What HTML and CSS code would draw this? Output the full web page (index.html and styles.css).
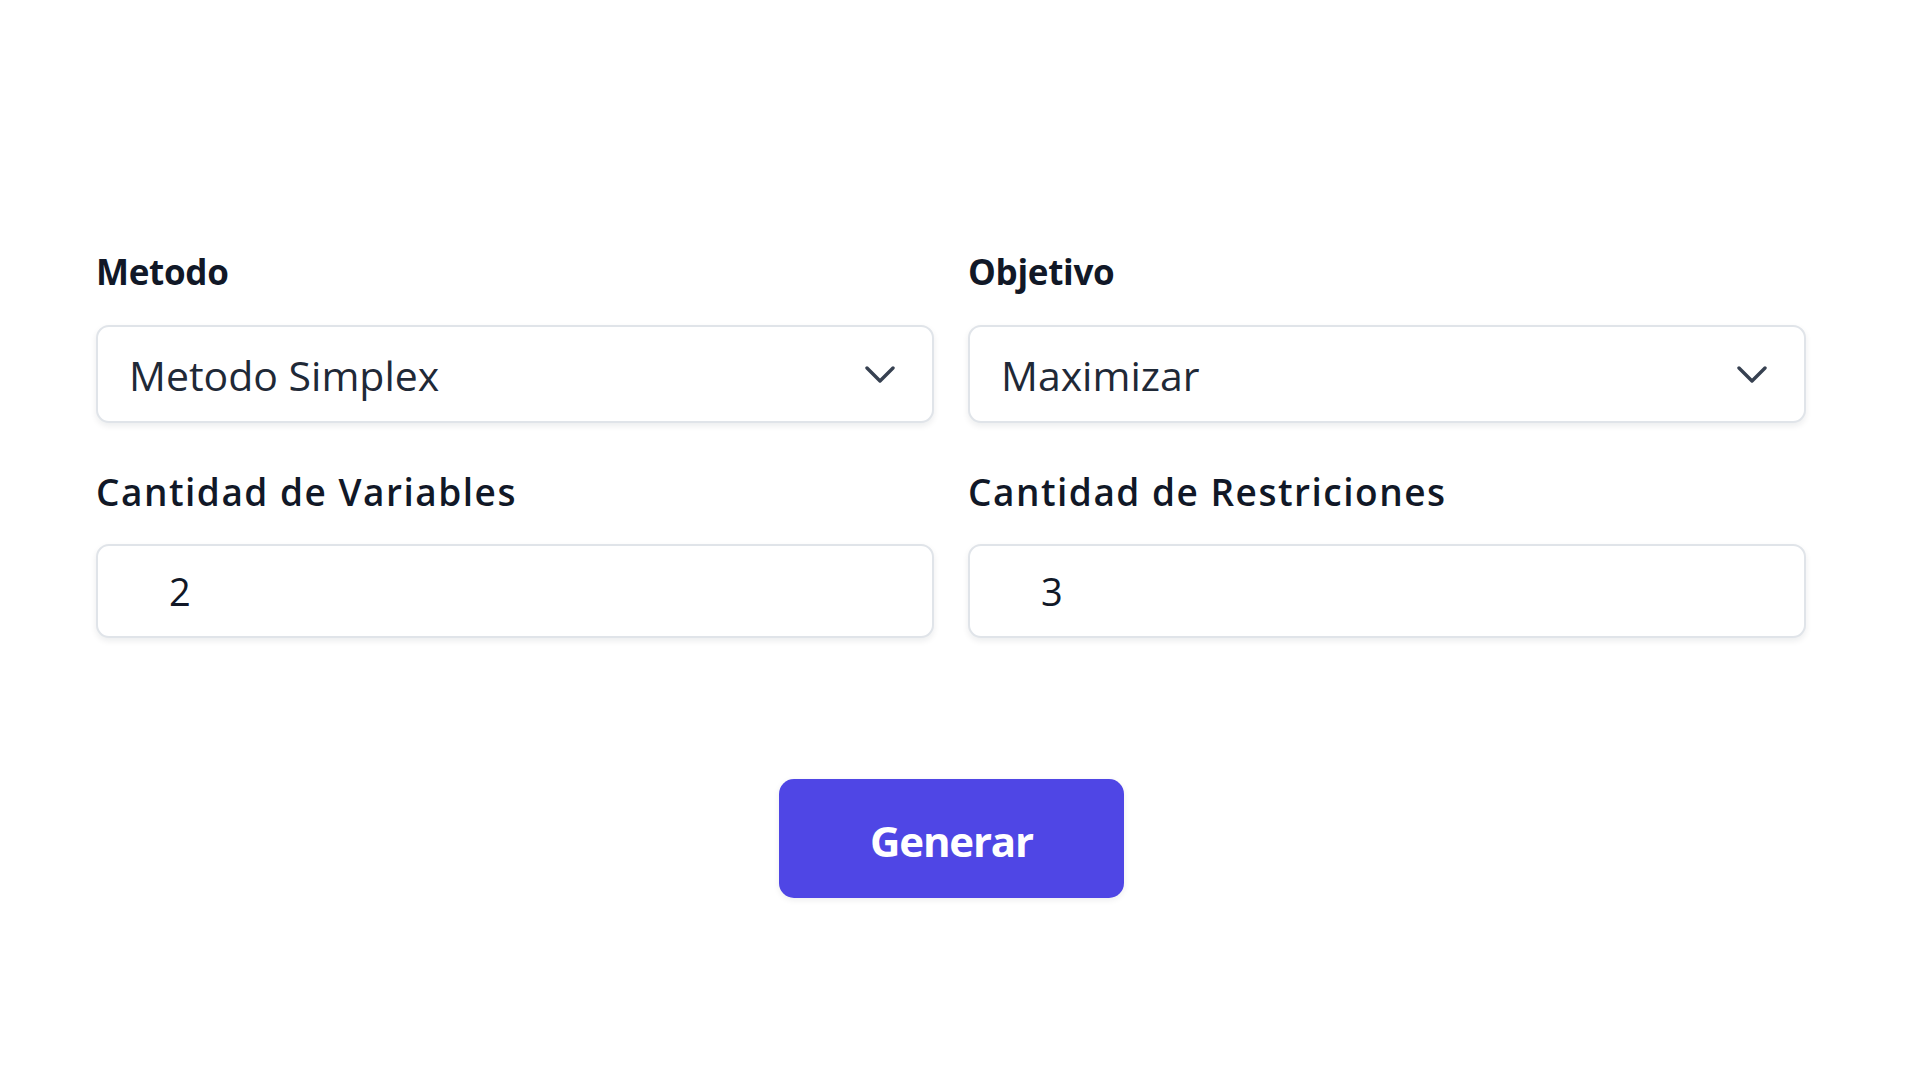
FILE: index.html
```html
<!DOCTYPE html>
<html lang="es">
<head>
<meta charset="utf-8">
<title>Metodo Simplex</title>
<link rel="stylesheet" href="styles.css">
</head>
<body>
<main class="page">
  <form class="form">
    <div class="grid">
      <div class="field">
        <label class="label label-top">Metodo</label>
        <div class="control select">
          <span class="value">Metodo Simplex</span>
          <svg class="chev" viewBox="0 0 30 18" width="30" height="18"><path d="M2 2 L15 15 L28 2" fill="none" stroke="#374151" stroke-width="3.4" stroke-linecap="round" stroke-linejoin="round"/></svg>
        </div>
      </div>
      <div class="field">
        <label class="label label-top">Objetivo</label>
        <div class="control select">
          <span class="value">Maximizar</span>
          <svg class="chev" viewBox="0 0 30 18" width="30" height="18"><path d="M2 2 L15 15 L28 2" fill="none" stroke="#374151" stroke-width="3.4" stroke-linecap="round" stroke-linejoin="round"/></svg>
        </div>
      </div>
      <div class="field">
        <label class="label label-mid">Cantidad de Variables</label>
        <div class="control input"><span class="num">2</span></div>
      </div>
      <div class="field">
        <label class="label label-mid">Cantidad de Restriciones</label>
        <div class="control input"><span class="num">3</span></div>
      </div>
    </div>
    <div class="actions">
      <button type="button" class="btn">Generar</button>
    </div>
  </form>
</main>
</body>
</html>
```
FILE: styles.css
```css
html, body {
  margin: 0;
  padding: 0;
  background: #ffffff;
}
body {
  font-family: "Open Sans", "Noto Sans", sans-serif;
  color: #1f2937;
}
.page {
  width: 1920px;
  height: 1080px;
  box-sizing: border-box;
  padding: 254px 113px 0 96px;
}
.grid {
  display: grid;
  grid-template-columns: 838px 838px;
  column-gap: 34px;
}
.field {
  display: flex;
  flex-direction: column;
}
.label {
  display: block;
  color: #111827;
  line-height: 1;
}
.label-top {
  font-size: 35px;
  font-weight: 700;
  letter-spacing: -0.3px;
  height: 34px;
  margin-bottom: 37px;
}
.label-mid {
  font-size: 37px;
  font-weight: 600;
  letter-spacing: 1.5px;
  height: 35px;
  margin-top: 50px;
  margin-bottom: 36px;
}
.control {
  box-sizing: border-box;
  border: 2px solid #e0e4e9;
  border-radius: 13px;
  background: #fff;
  box-shadow: 0 3px 6px rgba(15, 23, 42, 0.08);
  display: flex;
  align-items: center;
}
.select {
  height: 98px;
  padding: 2px 37px 0 31px;
  justify-content: space-between;
}
.value {
  font-size: 41px;
  line-height: 1;
  color: #1f2937;
  letter-spacing: 0;
}
.chev {
  display: block;
  margin-top: -1px;
}
.input {
  height: 94px;
  padding: 0 0 0 71px;
}
.num {
  font-size: 38px;
  line-height: 1;
  color: #111827;
}
.actions {
  display: flex;
  justify-content: center;
  margin-top: 141px;
}
.btn {
  width: 345px;
  height: 119px;
  border: 0;
  border-radius: 15px;
  background: #4f46e5;
  color: #ffffff;
  font-family: "Open Sans", "Noto Sans", sans-serif;
  font-size: 42px;
  font-weight: 700;
  letter-spacing: -1.2px;
  box-shadow: 0 2px 6px rgba(15, 23, 42, 0.08);
  padding: 4px 0 0 0;
}
```
